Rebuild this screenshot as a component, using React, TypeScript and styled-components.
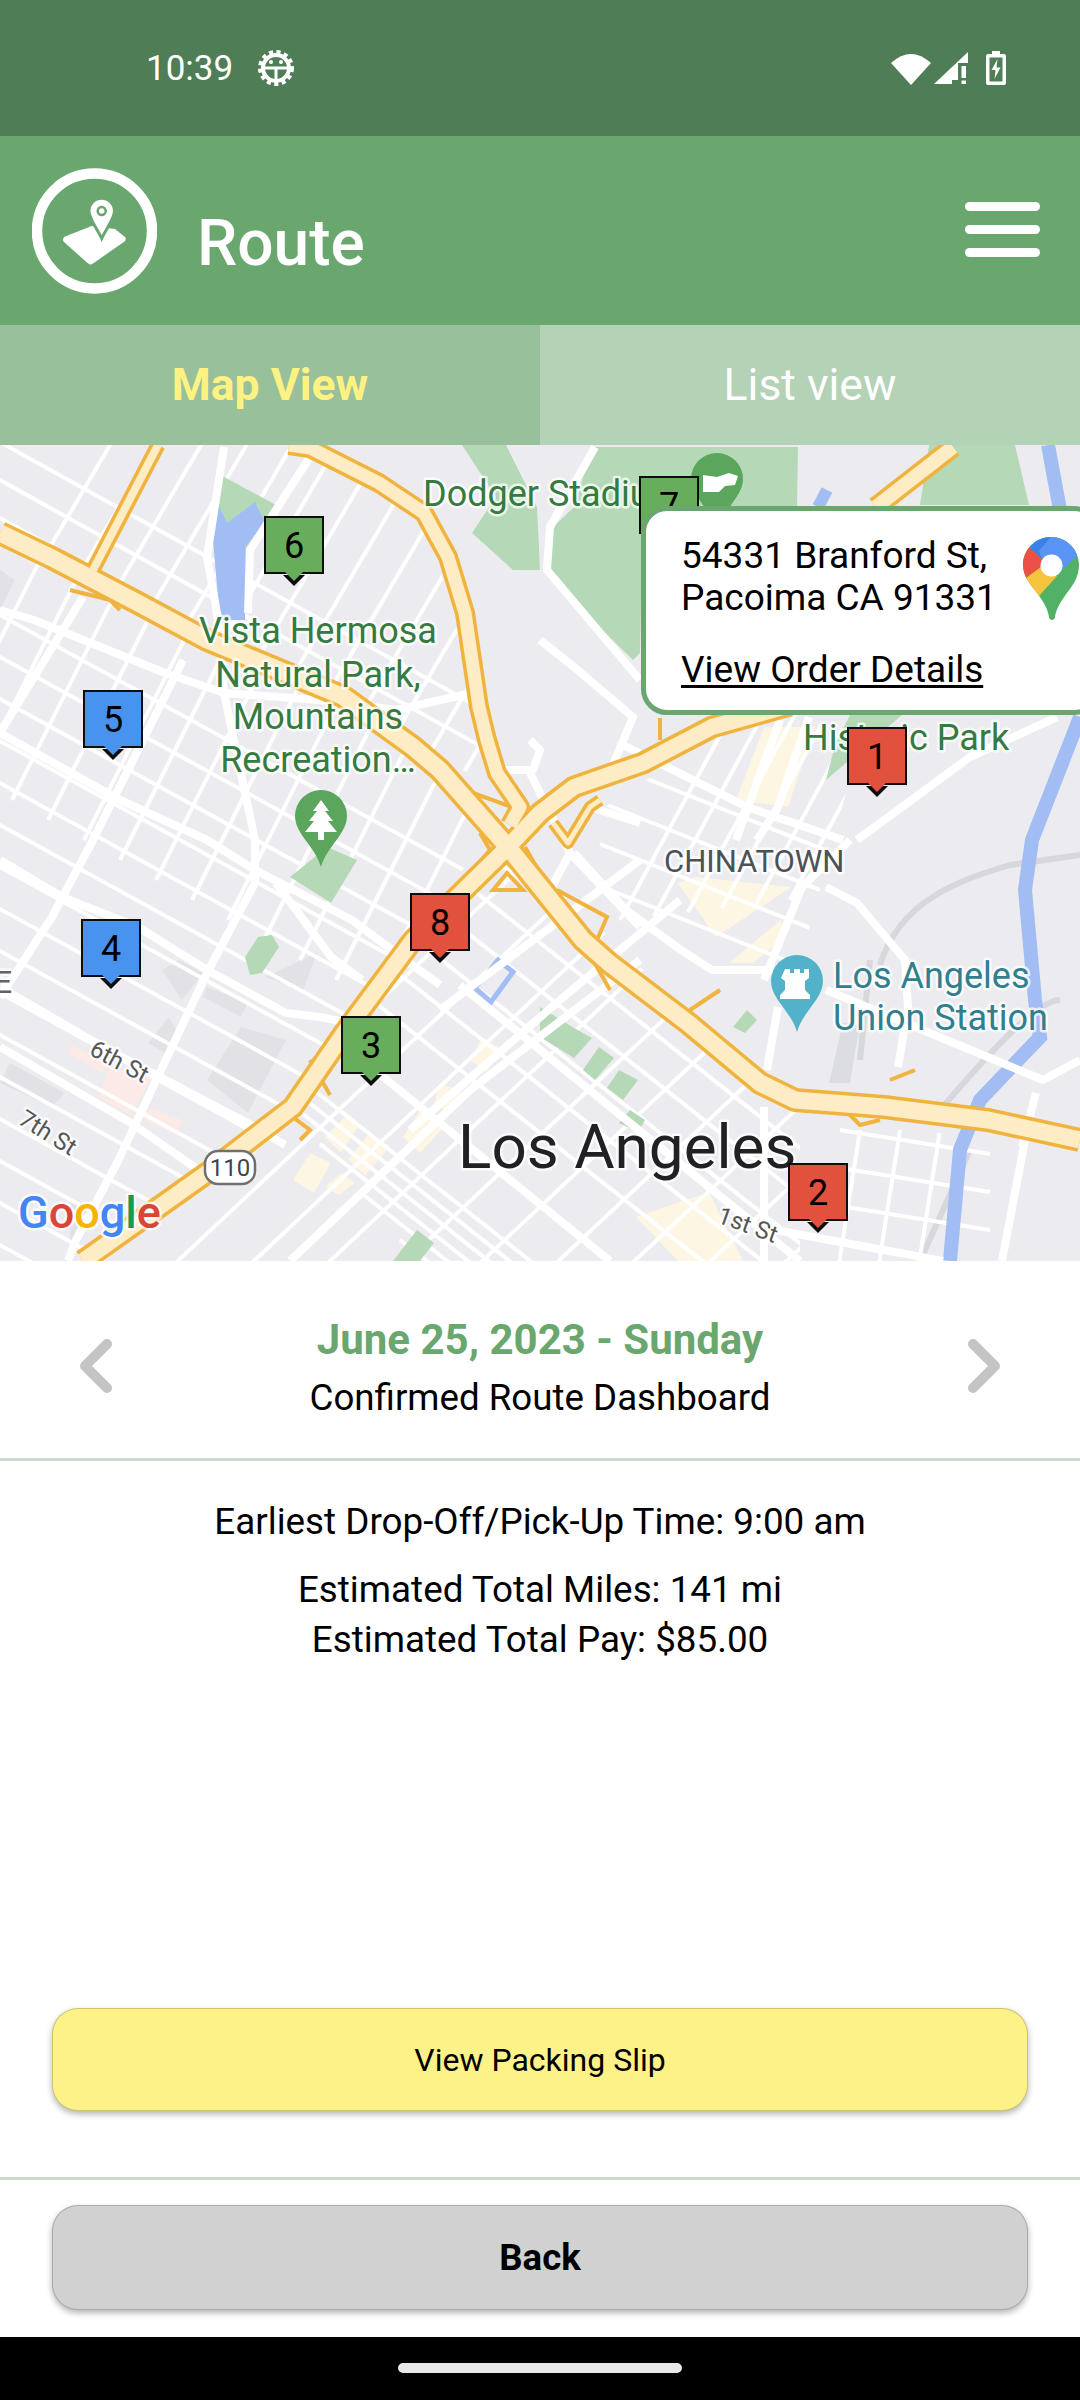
import React from 'react';
import styled, { createGlobalStyle } from 'styled-components';

const GlobalStyle = createGlobalStyle`
  html, body {
    margin: 0;
    padding: 0;
    background: #fff;
    font-family: Roboto, "Liberation Sans", sans-serif;
  }
`;

const GREEN = '#6aa76f';

const Page = styled.div`
  width: 1080px;
  height: 2400px;
  display: flex;
  flex-direction: column;
  overflow: hidden;
  background: #fff;
`;

const StatusBar = styled.div`
  height: 136px;
  flex: none;
  box-sizing: border-box;
  padding: 0 74px 0 146px;
  display: flex;
  align-items: center;
  background: #4f7d55;
  color: #fff;
`;

const Clock = styled.span`
  font-size: 35px;
  line-height: 40px;
  margin-right: 24px;
  padding-top: 2px;
`;

const StatusRight = styled.div`
  margin-left: auto;
  display: flex;
  align-items: center;
  gap: 3px;
`;

const BatteryIcon = styled.svg`
  margin-left: 15px;
`;

const Header = styled.header`
  height: 189px;
  flex: none;
  box-sizing: border-box;
  padding: 0 40px 0 32px;
  display: flex;
  align-items: center;
  background: ${GREEN};
`;

const HeaderTitle = styled.h1`
  margin: 27px 0 0 40px;
  font-size: 64px;
  line-height: 70px;
  font-weight: 500;
  color: #fff;
`;

const Burger = styled.div`
  margin-left: auto;
  width: 75px;
  display: flex;
  flex-direction: column;
  gap: 14px;
  margin-top: -2px;
`;

const BurgerBar = styled.span`
  height: 9px;
  border-radius: 5px;
  background: #fff;
`;

const Tabs = styled.div`
  height: 120px;
  flex: none;
  display: grid;
  grid-template-columns: 1fr 1fr;
`;

const Tab = styled.div<{ $active?: boolean }>`
  display: flex;
  align-items: center;
  justify-content: center;
  font-size: 44.5px;
  font-weight: ${p => (p.$active ? 700 : 400)};
  color: ${p => (p.$active ? '#fdf282' : '#fff')};
  background: ${p => (p.$active ? '#97c09b' : '#b3d2b6')};
`;

const MapArea = styled.section`
  position: relative;
  height: 816px;
  flex: none;
  overflow: hidden;
  background: #ecebef;
`;

const MapSvg = styled.svg`
  display: block;
  width: 1080px;
  height: 816px;
`;

const MapLabel = styled.text<{ $size?: number; $color?: string; $weight?: number }>`
  font-family: Roboto, sans-serif;
  font-size: ${p => p.$size ?? 36}px;
  font-weight: ${p => p.$weight ?? 400};
  fill: ${p => p.$color ?? '#357a3f'};
  stroke: rgba(255, 255, 255, 0.75);
  stroke-width: 5px;
  stroke-linejoin: round;
  paint-order: stroke;
`;

const Marker = styled.div<{ $x: number; $y: number; $color: string }>`
  position: absolute;
  left: ${p => p.$x}px;
  top: ${p => p.$y}px;
  width: 60px;
  height: 58px;
  box-sizing: border-box;
  border: 2.5px solid #0d0d0d;
  background: ${p => p.$color};
  color: #000;
  font-size: 36px;
  line-height: 57px;
  text-align: center;

  &::before {
    content: '';
    position: absolute;
    left: 16.5px;
    bottom: -13.5px;
    border-left: 11px solid transparent;
    border-right: 11px solid transparent;
    border-top: 11px solid #0d0d0d;
  }

  &::after {
    content: '';
    position: absolute;
    left: 18.5px;
    bottom: -9px;
    border-left: 9px solid transparent;
    border-right: 9px solid transparent;
    border-top: 9px solid ${p => p.$color};
  }
`;

const Callout = styled.div`
  position: absolute;
  left: 641px;
  top: 61px;
  width: 459px;
  height: 209px;
  box-sizing: border-box;
  padding: 24px 40px 0 35px;
  border: 5px solid ${GREEN};
  border-radius: 26px;
  background: #fff;
  color: #000;
  font-size: 37px;
  line-height: 42px;
`;

const AddressRow = styled.div`
  display: flex;
  justify-content: space-between;
`;

const MapsPin = styled.svg`
  flex: none;
  margin-top: 2px;
  margin-right: -24px;
`;

const OrderLink = styled.a`
  display: block;
  margin-top: 28px;
  color: #000;
  text-decoration: underline;
  text-underline-offset: 3px;
`;

const DateNav = styled.div`
  height: 197px;
  flex: none;
  box-sizing: border-box;
  padding: 12px 80px 0;
  display: flex;
  align-items: center;
  justify-content: space-between;
`;

const DateBlock = styled.div`
  text-align: center;
  margin-top: 2px;
`;

const DateTitle = styled.div`
  font-size: 42px;
  line-height: 50px;
  font-weight: 700;
  color: ${GREEN};
`;

const DateSub = styled.div`
  margin-top: 12px;
  font-size: 36.7px;
  line-height: 42px;
  color: #000;
`;

const Divider = styled.hr`
  flex: none;
  width: 100%;
  height: 3px;
  margin: 0;
  border: 0;
  background: #ced9d1;
`;

const FooterDivider = styled(Divider)`
  margin: 66px 0 25px;
`;

const Summary = styled.div`
  flex: 1;
  padding-top: 36px;
  text-align: center;
  font-size: 36.8px;
  line-height: 50px;
  color: #000;
`;

const SummaryGroup = styled.div`
  margin-top: 18px;
`;

const ActionRow = styled.div`
  flex: none;
  padding: 0 52px;
`;

const ActionButton = styled.button<{ $bg: string; $bold?: boolean; $height: number }>`
  display: block;
  width: 100%;
  height: ${p => p.$height}px;
  padding: 0;
  border: 1px solid rgba(0, 0, 0, 0.18);
  border-radius: 26px;
  background: ${p => p.$bg};
  box-shadow: 0 3px 6px rgba(0, 0, 0, 0.3);
  color: #000;
  font-family: Roboto, sans-serif;
  font-size: ${p => (p.$bold ? 36.5 : 32)}px;
  font-weight: ${p => (p.$bold ? 700 : 400)};
`;

const NavBar = styled.div`
  height: 63px;
  flex: none;
  margin-top: 27px;
  display: flex;
  justify-content: center;
  padding-top: 26px;
  box-sizing: border-box;
  background: #000;
`;

const HomePill = styled.span`
  width: 284px;
  height: 10px;
  border-radius: 5px;
  background: #e8e8e8;
`;

// parallel street lines, used for the small street grids
const parallel = (x: number, y: number, stepX: number, stepY: number, n: number, dx: number, dy: number) =>
  Array.from({ length: n }, (_, i) => {
    const sx = x + stepX * i;
    const sy = y + stepY * i;
    return `M${sx} ${sy}L${sx + dx} ${sy + dy}`;
  }).join('');

const MINOR_STREETS = [
  { clip: 'west', d: parallel(-60, 760, 36, 20, 22, 400, -800) },
  { clip: 'west', d: parallel(-100, 560, 0, 42, 17, 700, 385) },
  { clip: 'northwest', d: parallel(-40, 700, 42, 6, 13, 200, -340) },
  { clip: 'northwest', d: parallel(-40, 420, 0, 38, 10, 560, 310) },
  { clip: 'downtown', d: parallel(60, 1300, 42, 32, 12, 640, -600) },
  { clip: 'downtown', d: parallel(220, 880, 50, -8, 13, 620, 490) },
  { clip: 'downtown', d: parallel(200, 1000, 40, 48, 7, 620, 490) },
  { clip: 'chinatown', d: parallel(620, 920, 34, -4, 6, 130, -240) },
  { clip: 'chinatown', d: parallel(600, 760, 0, 42, 4, 300, 120) },
  { clip: 'eastGrid', d: parallel(860, 1130, 40, 0, 3, -22, 140) },
  { clip: 'eastGrid', d: parallel(840, 1130, 0, 38, 4, 150, 24) },
];

const MAJOR_STREETS = [
  'M0 610L34 620L165 673L224 693L320 700L396 710L472 693',
  'M0 733L83 597',
  'M0 997L52 917L93 840L183 660',
  'M0 733L120 800L207 840L255 870L352 920L396 953L440 985',
  'M224 447L207 557L217 613L224 693L255 840L255 883L207 973L117 1163L76 1240L68 1261',
  'M310 457L250 550L248 613',
  'M0 860L62 897L138 927L207 970L286 1013L320 1017L345 1022',
  'M0 987L103 1047L255 1127L285 1145',
  'M0 1047L131 1123L203 1173',
  'M276 883L331 957L362 980',
  'M574 853L626 910L681 950L712 970L774 970',
  'M764 980L802 887L850 840',
  'M826 887L857 903L905 960L908 1007L898 1067',
  'M826 990L1043 1080L1080 1060',
  'M764 1228L943 1261',
  'M764 1107V1261',
  'M1025 1140L1002 1261',
  'M1036 1093L1022 1147',
  'M778 1007L767 1070',
  'M595 447L550 527L547 570L640 680',
  'M619 743L747 807L843 840',
  'M781 717L736 840',
  'M809 717L778 807L757 840',
  'M857 840L970 757L1057 717',
  'M540 640L574 667L633 717L612 767',
  'M530 773L570 853L640 927',
  'M570 853L550 890',
  'M590 807L640 823',
  'M503 770L533 770L540 750L530 740',
  'M440 1010L560 920L640 860',
  'M460 985L800 1261',
  'M350 1050L610 1261',
  'M410 1130L560 1000L680 900',
  'M290 1261L470 1090L640 960',
];

const HIGHWAYS = [
  { w: 17, d: 'M0 533L52 558L138 603L207 640L344 697L413 747L440 770L508 847L583 940L609 963L688 1023L760 1083L795 1100L884 1107L988 1120L1080 1140' },
  { w: 16, d: 'M83 1261L207 1173L293 1107L344 1033L413 940L457 897L508 847L540 813L574 787L643 763L712 727L790 705' },
  { w: 13, d: 'M510 825L520 807L497 773L487 740L479 707L465 613L448 557L424 513L379 483L310 448L289 445' },
  { w: 8, d: 'M158 445L93 570' },
  { w: 14, d: 'M876 507L953 447' },
  { w: 5, d: 'M553 823L568 843L590 807L600 800' },
];

const RAMPS = [
  'M473 793L520 810',
  'M480 833L490 850L477 865',
  'M493 890L523 890L507 873Z',
  'M525 847L540 873L547 883',
  'M557 890L607 917L597 940',
  'M40 550L100 590L120 610',
  'M70 590L110 600L130 600',
  'M660 718V740',
  'M590 955L610 990',
  'M690 1010L720 990',
  'M845 1110L860 1125L880 1120',
  'M890 1080L915 1070',
  'M290 1115L310 1130L300 1140',
  'M310 1060L330 1095',
];

const PARKS = [
  '462,445 506,445 537,507 540,570 513,570 472,533 496,497',
  '592,447 798,447 797,507 643,507 640,653 633,660 585,613 550,573 547,533 574,507',
  '929,445 1015,445 1029,505 920,505',
  '850,715 902,715 826,780 835,745',
  '217,473 276,505 251,543 245,613 220,613',
  '290,877 327,847 357,860 331,903',
  '245,957 258,937 272,935 279,947 262,973 250,975',
  '540,1007 574,1028 592,1038 574,1058 540,1037',
  '599,1047 614,1058 595,1080 583,1070',
  '619,1070 638,1080 623,1100 607,1088',
  '630,1110 645,1120 638,1132 619,1123',
  '747,1010 757,1020 745,1033 733,1027',
  '417,1230 434,1243 420,1261 393,1261',
];

const WARM_BLOCKS = [
  '482,1037 503,1050 486,1072 470,1060',
  '441,1083 462,1093 448,1113 434,1103',
  '420,1110 444,1127 420,1153 403,1137',
  '345,1117 358,1127 341,1153 325,1137',
  '369,1133 390,1147 365,1175 348,1160',
  '310,1153 331,1163 314,1193 293,1180',
  '341,1173 355,1183 339,1195 325,1187',
  '636,1217 709,1192 743,1261 678,1261',
  '678,883 695,877 791,887 716,937',
  '729,963 781,920 785,937 753,963',
  '736,800 764,727 815,727 788,807',
];

const GRAY_BLOCKS = [
  '207,1080 241,1027 286,1040 248,1113',
  '265,977 317,953 303,990',
  '162,970 179,960 203,973 182,1000',
  '207,987 248,1003 241,1017 203,997',
  '148,1043 169,1017 176,1030 165,1053',
  '0,1083 10,1063 65,1093 52,1107',
  '0,570 15,580 0,610',
  '70,1200 95,1215 70,1245',
];

const PINK_BLOCKS = [
  '67,1053 72,1045 110,1063 103,1073',
  '110,1067 152,1078 131,1115 98,1097',
  '148,1107 183,1120 176,1135 143,1120',
];

const MapDrawing = () => (
  <MapSvg viewBox="0 445 1080 816">
    <defs>
      <clipPath id="west"><polygon points="0,533 207,640 344,697 500,817 413,940 293,1107 83,1261 0,1261" /></clipPath>
      <clipPath id="northwest"><polygon points="0,445 290,445 424,513 479,707 517,803 344,697 207,640 0,533" /></clipPath>
      <clipPath id="downtown"><polygon points="520,850 760,1083 800,1110 800,1261 100,1261 293,1107 413,940" /></clipPath>
      <clipPath id="chinatown"><polygon points="570,830 770,700 860,740 790,1000 760,1060 620,950" /></clipPath>
      <clipPath id="eastGrid"><polygon points="830,1120 1000,1140 990,1261 820,1261" /></clipPath>
    </defs>

    {GRAY_BLOCKS.map(p => <polygon key={p} points={p} fill="#e2e1e5" />)}
    {PINK_BLOCKS.map(p => <polygon key={p} points={p} fill="#fbeae6" />)}
    {WARM_BLOCKS.map(p => <polygon key={p} points={p} fill="#fdf6e3" />)}
    <polygon points="843,1023 860,1023 850,1083 829,1083" fill="#dcdde2" />
    <path d="M880 965C900 900 960 880 1010 865L1080 855M860 1060L870 960M940 1110C1000 1040 1040 1000 1060 1000M920 1261L970 1150" fill="none" stroke="#d6d8de" strokeWidth="6" />

    {MINOR_STREETS.map(s => (
      <path key={s.d} d={s.d} clipPath={`url(#${s.clip})`} fill="none" stroke="#fff" strokeWidth="4" />
    ))}

    {PARKS.map(p => <polygon key={p} points={p} fill="#b5d9b6" />)}
    <polygon points="215,497 227,523 255,502 265,523 245,547 245,620 220,620 213,540" fill="#a2bdf3" />
    <polygon points="475,988 498,960 513,972 491,1002" fill="none" stroke="#a2bdf3" strokeWidth="5" />
    <path d="M1048 445L1060 510M1080 717L1032 840L1025 890L1035 1000L1040 1037L980 1100L960 1150L950 1261" fill="none" stroke="#a2bdf3" strokeWidth="14" />
    <path d="M827 490L818 507" stroke="#a2bdf3" strokeWidth="12" />

    {MAJOR_STREETS.map(d => (
      <path key={d} d={d} fill="none" stroke="#fff" strokeWidth="8" strokeLinejoin="round" />
    ))}

    {RAMPS.map(d => (
      <path key={d} d={d} fill="none" stroke="#f0b33e" strokeWidth="4" />
    ))}
    {HIGHWAYS.map(h => (
      <path key={h.d} d={h.d} fill="none" stroke="#f0b33e" strokeWidth={h.w + 7} strokeLinejoin="round" />
    ))}
    {HIGHWAYS.map(h => (
      <path key={h.d} d={h.d} fill="none" stroke="#fdecc4" strokeWidth={h.w} strokeLinejoin="round" />
    ))}

    <MapLabel x="423" y="506">Dodger Stadium</MapLabel>
    <MapLabel x="318" y="643" textAnchor="middle">Vista Hermosa</MapLabel>
    <MapLabel x="318" y="687" textAnchor="middle">Natural Park,</MapLabel>
    <MapLabel x="318" y="729" textAnchor="middle">Mountains</MapLabel>
    <MapLabel x="318" y="772" textAnchor="middle">Recreation…</MapLabel>
    <MapLabel x="803" y="750">Historic Park</MapLabel>
    <MapLabel x="664" y="872" $size={31} $color="#4d5156">CHINATOWN</MapLabel>
    <MapLabel x="833" y="988" $color="#2f7f8f">Los Angeles</MapLabel>
    <MapLabel x="833" y="1030" $color="#2f7f8f">Union Station</MapLabel>
    <MapLabel x="458" y="1168" $size={62} $color="#202124">Los Angeles</MapLabel>
    <MapLabel x="-6" y="993" $size={32} $color="#5f6368">E</MapLabel>
    <MapLabel x="88" y="1054" $size={24} $color="#555" transform="rotate(28 88 1054)">6th St</MapLabel>
    <MapLabel x="17" y="1123" $size={24} $color="#555" transform="rotate(32 17 1123)">7th St</MapLabel>
    <MapLabel x="716" y="1222" $size={24} $color="#555" transform="rotate(20 716 1222)">1st St</MapLabel>

    {/* freeway shield */}
    <rect x="205" y="1151" width="50" height="33" rx="13" fill="#fff" stroke="#707070" strokeWidth="2.5" />
    <MapLabel x="230" y="1176" $size={24} $color="#444" textAnchor="middle">110</MapLabel>

    {/* park pin with tree */}
    <path d="M321 790a26 26 0 0 1 26 26c0 18-20 30-26 51c-6-21-26-33-26-51a26 26 0 0 1 26-26Z" fill="#5aa65c" />
    <path d="M321 800l8 11h-4l8 10h-5l9 11h-13v8h-6v-8h-13l9-11h-5l8-10h-4Z" fill="#fff" />

    {/* stadium pin */}
    <path d="M717 453a26 26 0 0 1 26 26c0 18-20 30-26 51c-6-21-26-33-26-51a26 26 0 0 1 26-26Z" fill="#5aa65c" />
    <path d="M703 475l14 2 12-4 9 3-3 9-10 1-6 6h-16Z" fill="#fff" />

    {/* station pin with rook */}
    <path d="M797 955a26 26 0 0 1 26 26c0 18-20 30-26 51c-6-21-26-33-26-51a26 26 0 0 1 26-26Z" fill="#52b2c9" />
    <path d="M785 969h5v4h4v-4h6v4h4v-4h5v9l-4 3v9l5 5v4h-30v-4l5-5v-9l-4-3Z" fill="#fff" />

    {/* map logo, as live text */}
    <MapLabel x="18" y="1228" $size={45} $weight={500} $color="#4285f4">G<tspan fill="#db4437">o</tspan><tspan fill="#f4b400">o</tspan><tspan fill="#4285f4">g</tspan><tspan fill="#0f9d58">l</tspan><tspan fill="#db4437">e</tspan></MapLabel>
  </MapSvg>
);

const GoogleMapsPin = () => (
  <MapsPin width="56" height="84" viewBox="0 0 56 84">
    <defs>
      <clipPath id="pinShape">
        <path d="M28 0C12.5 0 0 12.5 0 28C0 40 8 48 14 56C20 64 25 72 26 80C26.5 84 31.5 84 32 80C33 72 38 64 44 56C50 48 56 40 56 28C56 12.5 43.5 0 28 0Z" />
      </clipPath>
    </defs>
    <g clipPath="url(#pinShape)">
      <rect width="56" height="84" fill="#51b267" />
      <polygon points="0,0 28,0 16,14 19,22 7,11" fill="#3a82ea" />
      <polygon points="28,0 56,0 56,17 39,33 19,22 16,14" fill="#5a94f5" />
      <polygon points="0,5 7,11 19,22 18,30 3,41 0,41" fill="#ea5044" />
      <polygon points="3,41 18,30 34,39 16,59 8,52" fill="#f5c33d" />
    </g>
    <circle cx="28.5" cy="28.5" r="11" fill="#fff" />
  </MapsPin>
);

const MARKERS = [
  { n: 7, x: 639, y: 31, color: '#67ad5b' },
  { n: 6, x: 264, y: 71, color: '#67ad5b' },
  { n: 5, x: 83, y: 245, color: '#4893ee' },
  { n: 1, x: 847, y: 282, color: '#e2513d' },
  { n: 8, x: 410, y: 448, color: '#e2513d' },
  { n: 4, x: 81, y: 474, color: '#4893ee' },
  { n: 3, x: 341, y: 571, color: '#67ad5b' },
  { n: 2, x: 788, y: 718, color: '#e2513d' },
];

const Chevron = ({ flip }: { flip?: boolean }) => (
  <svg width="32" height="54" viewBox="0 0 32 54" fill="none">
    <path
      d={flip ? 'M5 5L27 27L5 49' : 'M27 5L5 27L27 49'}
      stroke="#c4c4c4"
      strokeWidth="10"
      strokeLinecap="round"
      strokeLinejoin="round"
    />
  </svg>
);

export default function App() {
  return (
    <Page>
      <GlobalStyle />
      <StatusBar>
        <Clock>10:39</Clock>
        <svg width="38" height="38" viewBox="0 0 38 38">
          <circle cx="19" cy="19" r="15.5" fill="none" stroke="#fff" strokeWidth="5" strokeDasharray="4 3.3" />
          <circle cx="19" cy="19" r="13" fill="none" stroke="#fff" strokeWidth="4" />
          <path d="M8 19H30M19 19V31" stroke="#fff" strokeWidth="3" />
          <circle cx="14" cy="13" r="2" fill="#fff" />
          <circle cx="24" cy="13" r="2" fill="#fff" />
        </svg>
        <StatusRight>
          <svg width="40" height="33" viewBox="0 0 40 33">
            <path d="M0 11Q20 -7 40 11L20 33Z" fill="#fff" />
          </svg>
          <svg width="34" height="32" viewBox="0 0 34 32">
            <path d="M0 32L34 0V11H24V28H18V32Z" fill="#fff" />
            <path d="M27.500 14H32V26H27.500ZM27.500 28.500H32V32H27.500Z" fill="#fff" />
          </svg>
          <BatteryIcon width="20" height="34" viewBox="0 0 20 34">
            <path d="M6 0H14V3H18Q20 3 20 5V32Q20 34 18 34H2Q0 34 0 32V5Q0 3 2 3H6Z" fill="#fff" />
            <rect x="3.500" y="6.500" width="13" height="24" fill="#4f7d55" />
            <path d="M11.500 8L5.500 19H9.500L8.500 28L14.500 16.500H10.500Z" fill="#fff" />
          </BatteryIcon>
        </StatusRight>
      </StatusBar>

      <Header>
        <svg width="125" height="126" viewBox="0 0 125 126">
          <circle cx="62.5" cy="63" r="57.500" fill="none" stroke="#fff" strokeWidth="10.500" />
          <path d="M33 68.500L59.700 58L83 61L93 69Q95 71.500 92.500 73.500L61 95.500Q58 97.500 55.500 95L32 74Q29.500 71 33 68.500Z" fill="#fff" />
          <path d="M69.700 30.300a12.700 12.700 0 0 1 12.700 12.700c0 8-8 17-12.700 27.500c-4.700-10.500-12.700-19.500-12.700-27.500a12.700 12.700 0 0 1 12.700-12.700Z" fill="#fff" stroke={GREEN} strokeWidth="3" />
          <circle cx="69.700" cy="43" r="4" fill="#fff" stroke={GREEN} strokeWidth="2.500" />
        </svg>
        <HeaderTitle>Route</HeaderTitle>
        <Burger>
          <BurgerBar />
          <BurgerBar />
          <BurgerBar />
        </Burger>
      </Header>

      <Tabs>
        <Tab $active>Map View</Tab>
        <Tab>List view</Tab>
      </Tabs>

      <MapArea>
        <MapDrawing />
        {MARKERS.map(m => (
          <Marker key={m.n} $x={m.x} $y={m.y} $color={m.color}>{m.n}</Marker>
        ))}
        <Callout>
          <AddressRow>
            <div>54331 Branford St,<br />Pacoima CA 91331</div>
            <GoogleMapsPin />
          </AddressRow>
          <OrderLink>View Order Details</OrderLink>
        </Callout>
      </MapArea>

      <DateNav>
        <Chevron />
        <DateBlock>
          <DateTitle>June 25, 2023 - Sunday</DateTitle>
          <DateSub>Confirmed Route Dashboard</DateSub>
        </DateBlock>
        <Chevron flip />
      </DateNav>
      <Divider />

      <Summary>
        Earliest Drop-Off/Pick-Up Time: 9:00 am
        <SummaryGroup>
          Estimated Total Miles: 141 mi<br />
          Estimated Total Pay: $85.00
        </SummaryGroup>
      </Summary>

      <ActionRow>
        <ActionButton $bg="#fcf287" $height={103}>View Packing Slip</ActionButton>
      </ActionRow>
      <FooterDivider />
      <ActionRow>
        <ActionButton $bg="#d1d1d1" $bold $height={105}>Back</ActionButton>
      </ActionRow>
      <NavBar>
        <HomePill />
      </NavBar>
    </Page>
  );
}
